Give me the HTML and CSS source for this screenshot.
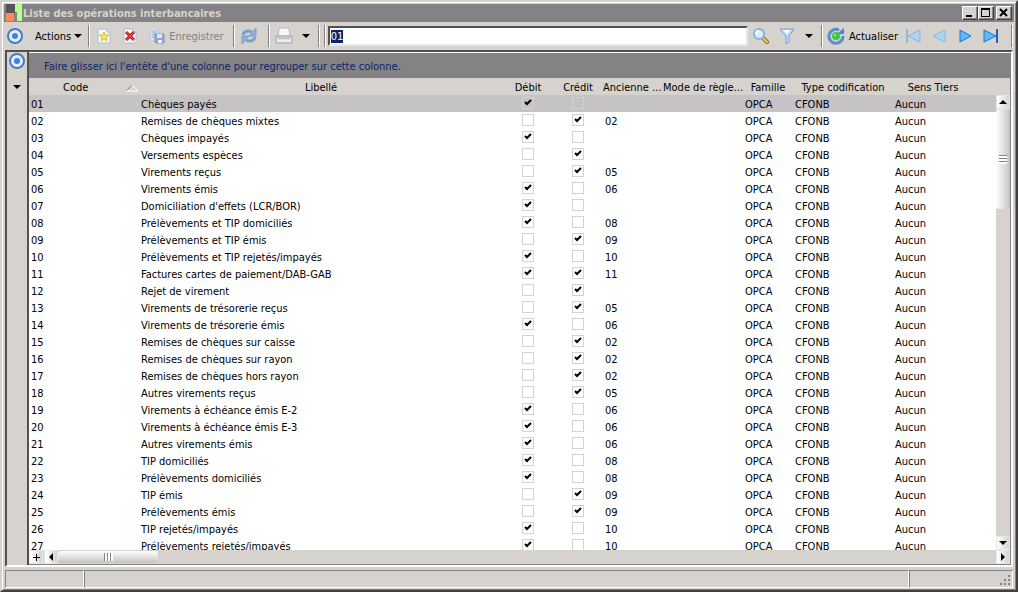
FILE: index.html
```html
<!DOCTYPE html>
<html lang="fr">
<head>
  <meta charset="UTF-8">
  <meta name="viewport" content="width=device-width, initial-scale=1.0">
  <title>Liste des opérations interbancaires</title>
  <link rel="stylesheet" href="styles.css">
</head>
<body>
  <div class="window">
    <header class="titlebar">
      <svg class="app-icon" width="16" height="18" viewBox="0 0 16 18" aria-hidden="true">
        <path d="M0 0h9v9H0z" fill="#555"/>
        <path d="M0 9h8v8H0z" fill="#ff8a52"/>
        <path d="M9 0h7v17h-5V8H9z" fill="#b5ff8c"/>
      </svg>
      <h1>Liste des opérations interbancaires</h1>
      <button class="caption" aria-label="Réduire"><svg width="14" height="12"><path d="M3 8h6v2H3z"/></svg></button>
      <button class="caption" aria-label="Agrandir"><svg width="14" height="12"><path d="M2 1h9v9H2zM3 3v6h7V3z" fill-rule="evenodd"/></svg></button>
      <button class="caption close" aria-label="Fermer"><svg width="14" height="12"><path d="M3 2l7 7M10 2l-7 7" stroke="#000" stroke-width="2"/></svg></button>
    </header>

    <nav class="toolbar">
      <svg class="target" width="18" height="18" viewBox="0 0 18 18" aria-hidden="true">
        <circle cx="9" cy="9" r="7" fill="#e7efff" stroke="#4a7bc6" stroke-width="2"/>
        <circle cx="9" cy="9" r="3" fill="#3984de"/>
      </svg>
      <button class="tool actions">Actions <span class="arrow"></span></button>
      <span class="sep"></span>
      <button class="tool icon" aria-label="Nouveau">
        <svg width="14" height="16" viewBox="0 0 14 16">
          <path d="M1 1h9l3 3v11H1z" fill="#f4f8ff" stroke="#a5bde0"/>
          <path d="M10 1v3h3" fill="#fff" stroke="#94aed6"/>
          <path d="M7 4l1 3 4 0-3 2 1 4-3-2-3 2 1-4-3-2 4 0z" fill="#ffe94a" stroke="#dec031"/>
        </svg>
      </button>
      <button class="tool icon" aria-label="Supprimer">
        <svg width="14" height="16" viewBox="0 0 14 16">
          <path d="M1 1h9l3 3v11H1z" fill="#f4f8ff" stroke="#a5bde0"/>
          <path d="M10 1v3h3" fill="#fff" stroke="#94aed6"/>
          <path d="M3 4l8 8M11 4l-8 8" stroke="#b51818" stroke-width="3"/>
          <path d="M3 4l8 8M11 4l-8 8" stroke="#ff5a4a"/>
        </svg>
      </button>
      <button class="tool save" disabled>
        <svg width="16" height="16" viewBox="0 0 16 16">
          <path d="M1 0h9v13H1z" fill="#d5deec" stroke="#b8c8de"/>
          <path d="M3 3h5M3 5h5M3 7h4M3 9h3" stroke="#a5b4ce"/>
          <path d="M6 6h9v9H7l-1-1z" fill="#91a5ca" stroke="#8294b8"/>
          <path d="M8 6h5v4H8z" fill="#dfe7f3"/><path d="M9 12h4v3H9z" fill="#eef1f7"/>
        </svg>
        Enregistrer
      </button>
      <span class="sep"></span>
      <button class="tool icon refresh" aria-label="Rafraîchir">
        <svg width="18" height="18" viewBox="0 0 18 18">
          <path d="M3 8c1-4 5-5 9-3M15 10c-1 4-5 5-9 3" fill="none" stroke="#7b9fcb" stroke-width="3"/>
          <path d="M16 1v8H9zM2 17V9h7z" fill="#8fb2dc" stroke="#7b9fcb"/>
        </svg>
      </button>
      <span class="sep"></span>
      <button class="tool icon" aria-label="Imprimer">
        <svg width="18" height="18" viewBox="0 0 18 18">
          <path d="M4 1h10l1 8H3z" fill="#f7f7fa" stroke="#b5b5bd"/>
          <path d="M1 9h16v7H1z" fill="#dedee3" stroke="#a5a5ad"/>
          <path d="M3 11h12" stroke="#aaa"/><path d="M2 14h14" stroke="#fff"/>
        </svg>
      </button>
      <button class="tool drop" aria-label="Options d'impression"><span class="arrow"></span></button>
      <span class="sep"></span>
      <span class="sep"></span>
      <input class="search" type="text" value="01" aria-label="Rechercher">
      <button class="tool icon" aria-label="Lancer la recherche">
        <svg width="18" height="18" viewBox="0 0 18 18">
          <path d="M11 11l4 4" stroke="#8c6b39" stroke-width="4" stroke-linecap="round"/>
          <path d="M11 11l4 4" stroke="#f7c66b" stroke-width="2" stroke-linecap="round"/>
          <circle cx="7" cy="7" r="5" fill="#d6efff" stroke="#8cadde" stroke-width="2"/>
          <path d="M4 7c0-2 1-3 3-3" fill="none" stroke="#fff" stroke-width="2"/>
        </svg>
      </button>
      <button class="tool icon" aria-label="Filtrer">
        <svg width="16" height="18" viewBox="0 0 16 18">
          <path d="M1 2h14l-5 7v6l-3 2V9z" fill="#c4dcfa" stroke="#7b9cd6"/>
          <path d="M4 3h7L8 8z" fill="#f4faff"/>
        </svg>
      </button>
      <button class="tool drop" aria-label="Options du filtre"><span class="arrow"></span></button>
      <span class="sep"></span>
      <button class="tool update">
        <svg width="18" height="18" viewBox="0 0 18 18">
          <path d="M12 3A7 7 0 1 0 16 9" fill="none" stroke="#5a8cce" stroke-width="3"/>
          <path d="M10 7h7V1z" fill="#4a84d6"/>
          <circle cx="9" cy="9" r="4" fill="#39c64a"/><circle cx="8" cy="8" r="1" fill="#a5f7a5"/>
        </svg>
        Actualiser
      </button>
      <button class="tool step" aria-label="Premier" disabled><svg width="16" height="16" viewBox="0 0 16 16"><path d="M2 1v14" stroke="#94b5d6" stroke-width="2"/><path d="M15 2v12L3 8z" fill="#add3f7" stroke="#8cb5de"/></svg></button>
      <button class="tool step" aria-label="Précédent" disabled><svg width="16" height="16" viewBox="0 0 16 16"><path d="M14 2v12L2 8z" fill="#add3f7" stroke="#8cb5de"/></svg></button>
      <button class="tool step" aria-label="Suivant"><svg width="16" height="16" viewBox="0 0 16 16"><path d="M3 2v12l11-6z" fill="#5abaff" stroke="#2173ce"/></svg></button>
      <button class="tool step" aria-label="Dernier"><svg width="16" height="16" viewBox="0 0 16 16"><path d="M1 2v12l12-6z" fill="#5abaff" stroke="#2173ce"/><path d="M14 1v14" stroke="#2163b5" stroke-width="2"/></svg></button>
      <span class="sep last"></span>
    </nav>

    <main class="content">
      <aside class="side">
        <svg width="18" height="18" viewBox="0 0 18 18" aria-hidden="true">
          <circle cx="9" cy="9" r="7" fill="#e7efff" stroke="#4a7bc6" stroke-width="2"/>
          <circle cx="9" cy="9" r="3" fill="#3984de"/>
        </svg>
        <button class="tool drop" aria-label="Menu"><span class="arrow"></span></button>
      </aside>

      <section class="grid">
        <p class="group-panel">Faire glisser ici l'entête d'une colonne pour regrouper sur cette colonne.</p>
        <div class="grid-body">
          <div class="viewport">
            <table>
              <colgroup>
                <col class="c-code"><col><col class="c-check"><col class="c-check"><col class="c-old">
                <col class="c-mode"><col class="c-family"><col class="c-type"><col class="c-third"><col class="c-rest">
              </colgroup>
              <thead>
                <tr>
                  <th><span class="sorted">Code <svg width="14" height="8" viewBox="0 0 14 8" aria-hidden="true"><path d="M1 7l6-6" stroke="#848284"/><path d="M7 1l6 6H1" fill="none" stroke="#fff"/></svg></span></th>
                  <th>Libellé</th><th>Débit</th><th>Crédit</th>
                  <th class="cut">Ancienne ...</th><th class="cut">Mode de règle...</th>
                  <th>Famille</th><th>Type codification</th><th>Sens Tiers</th><td></td>
                </tr>
              </thead>
              <tbody id="rows"></tbody>
            </table>
          </div>
          <div class="vscroll">
            <button class="sb up" aria-label="Défiler vers le haut"></button>
            <div class="thumb"></div>
            <button class="sb down" aria-label="Défiler vers le bas"></button>
          </div>
        </div>
        <div class="hscroll">
          <button class="sb plus" aria-label="Ajouter"></button>
          <button class="sb left" aria-label="Défiler à gauche"></button>
          <div class="thumb"></div>
          <button class="sb right" aria-label="Défiler à droite"></button>
        </div>
      </section>
    </main>

    <footer class="statusbar">
      <div class="cell first"></div>
      <div class="cell middle"></div>
      <div class="cell end">
        <svg width="12" height="12" viewBox="0 0 12 12" fill="#848284" aria-hidden="true">
          <path d="M8 0h2v2H8zM4 4h2v2H4zM8 4h2v2H8zM0 8h2v2H0zM4 8h2v2H4zM8 8h2v2H8z"/>
        </svg>
      </div>
    </footer>
  </div>

  <script>
    // libellé, sens (D = débit, C = crédit), ancien code
    const operations = [
      ['Chèques payés', 'D', ''],
      ['Remises de chèques mixtes', 'C', '02'],
      ['Chèques impayés', 'D', ''],
      ['Versements espèces', 'C', ''],
      ['Virements reçus', 'C', '05'],
      ['Virements émis', 'D', '06'],
      ["Domiciliation d'effets (LCR/BOR)", 'D', ''],
      ['Prélèvements et TIP domiciliés', 'D', '08'],
      ['Prélèvements et TIP émis', 'C', '09'],
      ['Prélèvements et TIP rejetés/impayés', 'D', '10'],
      ['Factures cartes de paiement/DAB-GAB', 'DC', '11'],
      ['Rejet de virement', 'C', ''],
      ['Virements de trésorerie reçus', 'C', '05'],
      ['Virements de trésorerie émis', 'D', '06'],
      ['Remises de chèques sur caisse', 'C', '02'],
      ['Remises de chèques sur rayon', 'C', '02'],
      ['Remises de chèques hors rayon', 'C', '02'],
      ['Autres virements reçus', 'C', '05'],
      ['Virements à échéance émis E-2', 'D', '06'],
      ['Virements à échéance émis E-3', 'D', '06'],
      ['Autres virements émis', 'D', '06'],
      ['TIP domiciliés', 'D', '08'],
      ['Prélèvements domiciliés', 'D', '08'],
      ['TIP émis', 'C', '09'],
      ['Prélèvements émis', 'C', '09'],
      ['TIP rejetés/impayés', 'D', '10'],
      ['Prélèvements rejetés/impayés', 'D', '10']
    ];

    function check(on, label) {
      return `<td class="check"><input type="checkbox" aria-label="${label}"${on ? ' checked' : ''}></td>`;
    }

    document.getElementById('rows').innerHTML = operations.map(([label, side, old], i) => {
      const code = String(i + 1).padStart(2, '0');
      return `<tr${i === 0 ? ' class="selected"' : ''}>
        <td>${code}</td><td class="label">${label}</td>
        ${check(side.includes('D'), 'Débit ' + code)}${check(side.includes('C'), 'Crédit ' + code)}
        <td>${old}</td><td></td><td>OPCA</td><td>CFONB</td><td>Aucun</td><td></td>
      </tr>`;
    }).join('');

    const search = document.querySelector('.search');
    search.focus();
    search.select();
  </script>
</body>
</html>
```
FILE: styles.css
```css
* {
  box-sizing: border-box;
}
body {
  margin: 0;
  background: #d6d3ce;
  font-family: Tahoma, "DejaVu Sans Condensed", "DejaVu Sans", sans-serif;
  font-size: 11px;
  line-height: 17px;
  color: #000;
}
button, input {
  font: inherit;
  color: inherit;
  margin: 0;
  padding: 0;
}
svg {
  display: block;
  flex: none;
}
.window {
  display: flex;
  flex-direction: column;
  height: 100vh;
  padding: 2px;
  border: 2px solid;
  border-color: #d6d3ce #424142 #424142 #d6d3ce;
  box-shadow: inset 1px 1px #fff, inset -1px -1px #848284;
  overflow: hidden;
}

/* title bar */
.titlebar {
  display: flex;
  align-items: center;
  flex: none;
  height: 18px;
  padding: 0 2px;
  background: #848284;
}
.titlebar h1 {
  flex: 1;
  margin: 0 0 0 1px;
  font-size: 11px;
  font-weight: bold;
  color: #d6d3ce;
}
.caption {
  width: 16px;
  height: 14px;
  background: #d6d3ce;
  border: 1px solid;
  border-color: #fff #424142 #424142 #fff;
  box-shadow: inset -1px -1px #848284;
}
.caption.close {
  margin-left: 2px;
}

/* toolbar */
.toolbar {
  display: flex;
  align-items: center;
  flex: none;
  height: 28px;
  padding-left: 2px;
}
.tool {
  display: flex;
  align-items: center;
  justify-content: center;
  gap: 4px;
  background: none;
  border: none;
}
.tool:disabled {
  color: #848284;
}
.arrow {
  border: 4px solid transparent;
  border-top-color: #000;
  border-bottom: 0;
}
.actions {
  gap: 3px;
  margin-left: 11px;
  margin-right: 3px;
}
.sep {
  width: 2px;
  height: 22px;
  margin: 0 1px 0 3px;
  border-left: 1px solid #848284;
  border-right: 1px solid #fff;
}
.sep.last {
  margin: 0 1px 0 7px;
}
.icon {
  width: 26px;
}
.refresh {
  margin-right: 3px;
}
.save {
  margin: 0 6px;
}
.drop {
  width: 18px;
}
.search {
  flex: 1;
  min-width: 0;
  height: 20px;
  margin-left: 1px;
  padding: 0 1px;
  background: #fff;
  border: 2px solid;
  border-color: #525152 #e7e7e7 #e7e7e7 #525152;
  border-radius: 0;
  outline: none;
}
.search::selection {
  background: #08246b;
  color: #fff;
}
.update {
  margin: 0 2px 0 3px;
}
.step {
  width: 26px;
}

/* content */
.content {
  display: flex;
  flex: 1;
  min-height: 0;
  margin: 0 1px 3px;
  border: 2px solid;
  border-color: #525152 #fff #fff #525152;
}
.side {
  display: flex;
  flex-direction: column;
  align-items: center;
  gap: 15px;
  width: 22px;
  border-right: 2px solid #525152;
}
.grid {
  display: flex;
  flex-direction: column;
  flex: 1;
  min-width: 0;
  border-top: 1px solid #fff;
  border-right: 1px solid #848284;
  border-bottom: 1px solid #848284;
}
.group-panel {
  flex: none;
  margin: 0;
  padding: 2px 15px 0;
  line-height: 23px;
  background: #848284;
  color: #08246b;
}
.grid-body {
  display: flex;
  flex: 1;
  min-height: 0;
}
.viewport {
  flex: 1;
  min-width: 0;
  overflow: hidden;
}
table {
  width: 100%;
  table-layout: fixed;
  border-collapse: collapse;
}
th, td {
  height: 17px;
  padding: 2px 2px 0;
  line-height: 15px;
  text-align: left;
  white-space: nowrap;
  overflow: hidden;
}
th {
  padding: 2px 0 0;
  font-weight: normal;
  text-align: center;
}
th.cut {
  text-align: left;
}
tbody {
  background: #fff;
}
.selected {
  background: #c6c3c6;
}
.c-code { width: 110px; }
.c-check { width: 50px; }
.c-old { width: 60px; }
.c-mode { width: 80px; }
.c-family { width: 50px; }
.c-type { width: 100px; }
.c-third { width: 80px; }
.c-rest { width: 23px; }
.sorted {
  display: flex;
  align-items: center;
  justify-content: space-between;
  padding: 0 0 0 34px;
}
.check {
  vertical-align: top;
}
.check input {
  display: block;
  appearance: none;
  width: 12px;
  height: 12px;
  margin: 0 auto;
  border: 1px solid #d6d3ce;
}
.check input:checked {
  background: url('data:image/svg+xml,<svg xmlns="http://www.w3.org/2000/svg" width="10" height="10"><path d="M2 4l2 2 4-4" fill="none" stroke="black" stroke-width="2"/></svg>') no-repeat;
}

/* scrollbars */
.vscroll {
  display: flex;
  flex-direction: column;
  width: 14px;
  margin-top: 17px;
}
.hscroll {
  display: flex;
  flex: none;
  height: 14px;
}
.sb {
  position: relative;
  flex: none;
  width: 14px;
  height: 14px;
  background: linear-gradient(to right, #fff, #d6d3ce);
  border: 1px solid #e7e7e7;
}
.sb::before {
  content: "";
  position: absolute;
  inset: 0;
  margin: auto;
  width: 0;
  height: 0;
  border: 4px solid transparent;
}
.up::before { border-bottom-color: #000; border-top: 0; }
.down::before { border-top-color: #000; border-bottom: 0; }
.left::before { border-right-color: #000; border-left: 0; }
.right::before { border-left-color: #000; border-right: 0; }
.plus::before {
  width: 7px;
  height: 7px;
  border: 0;
  background: linear-gradient(#000, #000) center / 7px 1px no-repeat, linear-gradient(#000, #000) center / 1px 7px no-repeat;
}
.down {
  margin-top: auto;
}
.right {
  margin-left: auto;
}
.left {
  margin-left: 1px;
}
.thumb {
  border-radius: 3px;
}
.vscroll .thumb {
  height: 100px;
  background: repeating-linear-gradient(#848284 0 1px, #fff 1px 3px) center / 8px 9px no-repeat, linear-gradient(to right, #fff, #c6c3bd);
}
.hscroll .thumb {
  width: 100px;
  height: 12px;
  margin-top: 1px;
  background: repeating-linear-gradient(to right, #848284 0 1px, #fff 1px 3px) center / 9px 8px no-repeat, linear-gradient(#fff, #c6c3bd);
}

/* status bar */
.statusbar {
  display: flex;
  flex: none;
  height: 18px;
  margin: 0 1px;
}
.cell {
  border: 1px solid;
  border-color: #848284 #fff #fff #848284;
}
.first {
  width: 79px;
}
.middle {
  flex: 1;
}
.end {
  display: flex;
  align-items: flex-end;
  justify-content: flex-end;
  width: 104px;
}
```
